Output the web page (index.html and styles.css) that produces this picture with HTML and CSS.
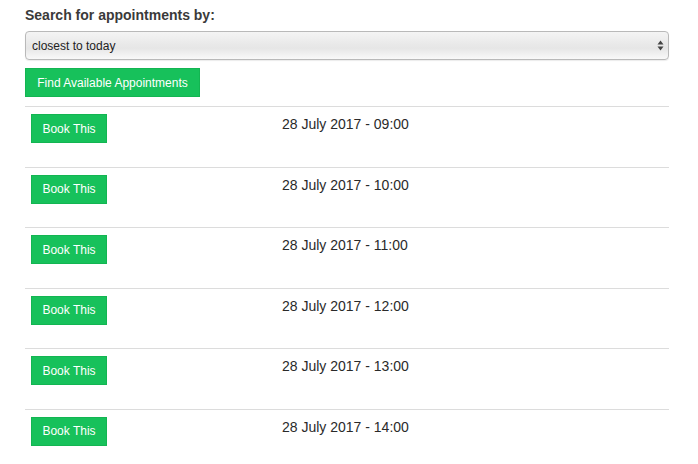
FILE: index.html
```html
<!DOCTYPE html>
<html lang="en">
  <head>
    <meta charset="UTF-8" />
    <meta name="viewport" content="width=device-width, initial-scale=1.0" />
    <title>Book an Appointment</title>
    <link rel="stylesheet" href="styles.css">
  </head>
  <body>
    <div class="container">
      <label class="search-label" for="search-by">Search for appointments by:</label>
      <div class="select-wrap">
        <select id="search-by" class="search-select">
          <option>closest to today</option>
          <option>furthest from today</option>
        </select>
        <svg class="select-arrows" width="7" height="11" viewBox="0 0 7 11">
          <path d="M3.5 0.5 L6.5 4.5 L0.5 4.5 Z" fill="#444" />
          <path d="M3.5 10.5 L6.5 6.5 L0.5 6.5 Z" fill="#444" />
        </svg>
      </div>
      <button class="btn btn-find">Find Available Appointments</button>

      <div class="slots">
        <div class="slot">
          <div><button class="btn btn-book">Book This</button></div>
          <div class="slot-date">28 July 2017 - 09:00</div>
        </div>
        <div class="slot">
          <div><button class="btn btn-book">Book This</button></div>
          <div class="slot-date">28 July 2017 - 10:00</div>
        </div>
        <div class="slot">
          <div><button class="btn btn-book">Book This</button></div>
          <div class="slot-date">28 July 2017 - 11:00</div>
        </div>
        <div class="slot">
          <div><button class="btn btn-book">Book This</button></div>
          <div class="slot-date">28 July 2017 - 12:00</div>
        </div>
        <div class="slot">
          <div><button class="btn btn-book">Book This</button></div>
          <div class="slot-date">28 July 2017 - 13:00</div>
        </div>
        <div class="slot">
          <div><button class="btn btn-book">Book This</button></div>
          <div class="slot-date">28 July 2017 - 14:00</div>
        </div>
      </div>
    </div>
  </body>
</html>
```

FILE: styles.css
```css
* {
  box-sizing: border-box;
  margin: 0;
  padding: 0;
}
body {
  font-family: "Liberation Sans", Arial, sans-serif;
  background: #fff;
  color: #333;
  font-size: 14px;
  line-height: 20px;
}
.container {
  width: 644px;
  margin-left: 25px;
  padding-top: 5px;
}
.search-label {
  display: block;
  font-weight: bold;
  font-size: 14px;
  color: #3a3a3a;
}
.select-wrap {
  position: relative;
  margin-top: 6px;
}
.search-select {
  -webkit-appearance: none;
  appearance: none;
  display: block;
  width: 100%;
  height: 29px;
  padding: 0 6px;
  font-family: inherit;
  font-size: 12px;
  color: #222;
  border: 1px solid #b9b9b9;
  border-radius: 4px;
  background: linear-gradient(to bottom, #f4f4f4 0%, #e9e9e9 45%, #e6e6e6 60%, #f9f9f9 100%);
  box-shadow: 0 1px 1px rgba(0, 0, 0, 0.08);
}
.select-arrows {
  position: absolute;
  right: 5px;
  top: 9px;
  pointer-events: none;
}
.btn {
  font-family: inherit;
  font-size: 12px;
  color: #fff;
  background: #17c15b;
  border: 1px solid #13b552;
  height: 29px;
  cursor: pointer;
}
.btn:hover {
  background: #13ad51;
}
.btn-find {
  display: block;
  margin-top: 8px;
  width: 175px;
}
.btn-book {
  width: 76px;
}
.slots {
  margin-top: 9px;
}
.slot {
  display: grid;
  grid-template-columns: 251px 1fr;
  align-items: start;
  height: 60.6px;
  padding: 7px 0 0 6px;
  border-top: 1px solid #dcdcdc;
}
.slot-date {
  font-size: 14px;
  line-height: 20px;
  color: #2a2a2a;
}
```
